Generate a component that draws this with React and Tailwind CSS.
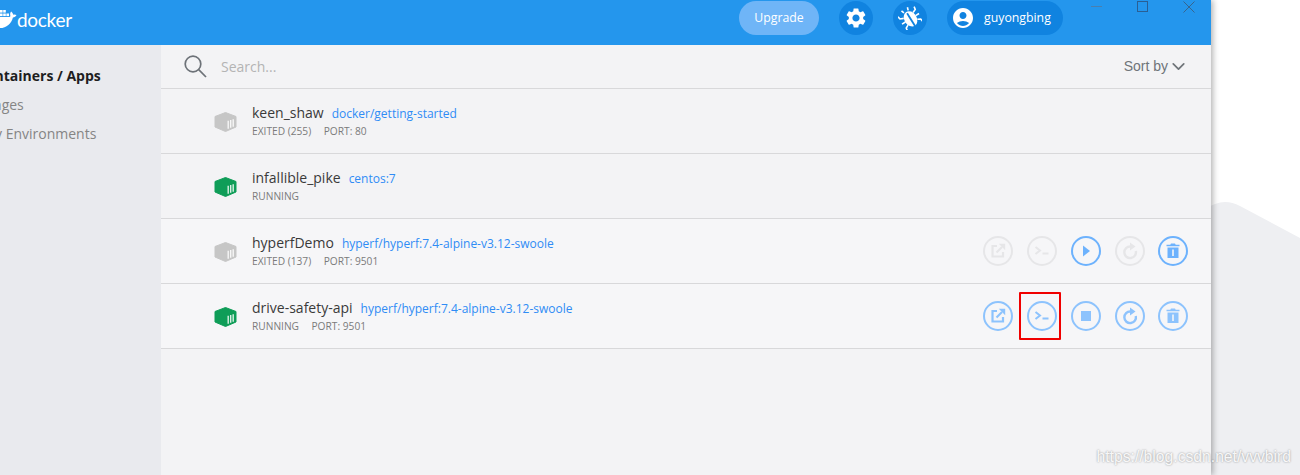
import React from "react";
import { MdSettings, MdAccountCircle, MdStop } from "react-icons/md";
import { ChevronDown } from "lucide-react";

const containers = [
  { name: "keen_shaw", image: "docker/getting-started", status: "EXITED (255)", port: "PORT: 80", running: false },
  { name: "infallible_pike", image: "centos:7", status: "RUNNING", running: true },
  { name: "hyperfDemo", image: "hyperf/hyperf:7.4-alpine-v3.12-swoole", status: "EXITED (137)", port: "PORT: 9501", running: false, actions: "stopped" },
  { name: "drive-safety-api", image: "hyperf/hyperf:7.4-alpine-v3.12-swoole", status: "RUNNING", port: "PORT: 9501", running: true, actions: "running" },
];

// whale is cut by the left edge of the window
function WhaleLogo() {
  return (
    <svg width="17" height="24" viewBox="0 0 17 24" className="shrink-0 fill-white">
      <rect x="0" y="5.500" width="2.600" height="2.600" />
      <rect x="3.200" y="5.500" width="2.600" height="2.600" />
      <rect x="3.200" y="2" width="2.600" height="2.600" />
      <rect x="0" y="2" width="2.600" height="2.600" />
      <rect x="6.400" y="5.500" width="2.600" height="2.600" />
      <path d="M0 9h8.800c.9 0 1.500-.4 1.600-1.100-.5-1.500-.3-3 .7-4.400 1.200.9 1.900 2 2 3.200 1-.4 2.300-.3 3.400.4-.7 1.500-2 2.300-3.600 2.300C11.500 15.500 6.500 20 0 20Z" />
    </svg>
  );
}

function BugIcon() {
  return (
    <svg width="24" height="24" viewBox="0 0 24 24">
      <g transform="rotate(-32 12 12)">
        <g stroke="#fff" strokeWidth="1.600" fill="none">
          <path d="M6.500 9 3 7.500 2.500 4.500" />
          <path d="M17.500 9 21 7.500 21.500 4.500" />
          <path d="M6 13H2" />
          <path d="M18 13h4" />
          <path d="M6.500 17 3.500 18.500 3 21.500" />
          <path d="M17.500 17 20.500 18.500 21 21.500" />
          <path d="M9.500 4.500 8.500 1.500" />
          <path d="M14.500 4.500 15.500 1.500" />
        </g>
        <ellipse cx="12" cy="13" rx="6.200" ry="8.200" fill="#fff" />
        <path d="M12 6.500V21.500" stroke="#1083e0" strokeWidth="1.800" />
      </g>
    </svg>
  );
}

function SearchGlyph() {
  return (
    <svg width="23" height="23" viewBox="0 0 23 23" fill="none" stroke="#6d7278" strokeWidth="1.700" className="shrink-0">
      <circle cx="9" cy="9" r="7.800" />
      <path d="M14.700 14.700 22 22" />
    </svg>
  );
}

function ContainerIcon({ running }) {
  const fill = running ? "#0f9d58" : "#c6c6c6";
  return (
    <svg width="23" height="20" viewBox="0 0 23 20" className="shrink-0 mt-[1px]">
      <path d="M11.500 0.500 22 4.500V15L11.500 19.500 1 15V4.500Z" fill={fill} stroke={fill} strokeLinejoin="round" />
      <path d="M13.500 8.800h1.400v8h-1.400zM16 8h1.400v7.800H16zM18.500 7.200h1.400v7.600h-1.400z" fill="#fff" opacity="0.85" />
    </svg>
  );
}

function OpenGlyph() {
  return (
    <svg width="18" height="18" viewBox="0 0 18 18" fill="none" stroke="currentColor" strokeWidth="2.200">
      <path d="M8 4H3.500V14.500H14V10" />
      <path d="M7.500 10.500 13 5" />
      <path d="M9.800 1.800H16.200V8.200Z" fill="currentColor" stroke="none" />
    </svg>
  );
}

function TerminalGlyph() {
  return (
    <svg width="18" height="18" viewBox="0 0 18 18" fill="none" stroke="currentColor" strokeWidth="2">
      <path d="M2.500 5 7 8.500 2.500 12" />
      <path d="M9.500 11.500h6" />
    </svg>
  );
}

function PlayGlyph() {
  return (
    <svg width="18" height="18" viewBox="0 0 18 18" fill="currentColor">
      <path d="M6 3.500 13 9 6 14.500Z" />
    </svg>
  );
}

function RestartGlyph() {
  return (
    <svg width="20" height="20" viewBox="0 0 20 20" fill="none">
      <path d="M10.500 5.500A5.800 5.800 0 1 0 15.800 10" stroke="currentColor" strokeWidth="2.400" />
      <path d="M10 1.500 15.500 5.500 10 9.500Z" fill="currentColor" />
    </svg>
  );
}

function TrashGlyph() {
  return (
    <svg width="18" height="18" viewBox="0 0 18 18" fill="currentColor">
      <path d="M7 1.500h4l.7 1.200H15.500v1.600H2.500V2.700h3.800Z" />
      <path d="M3.500 5.500h11V16H3.500ZM8.200 7.500v6.500h1.600V7.500Z" fillRule="evenodd" />
    </svg>
  );
}

// tone: off = greyed out, on = full blue, soft = pale blue
function ActionButton({ tone, className = "", children }) {
  const toneClass = {
    off: "border-[#e6e6e8] text-[#e6e6e8]",
    on: "border-[#6db2fd] text-[#6db2fd]",
    soft: "border-[#8dc3fd] text-[#8dc3fd]",
  }[tone];
  return (
    <div className={`w-[30px] h-[30px] rounded-full border-2 flex items-center justify-center shrink-0 ${toneClass} ${className}`}>
      {children}
    </div>
  );
}

function RowActions({ kind }) {
  if (kind === "stopped") {
    return (
      <div className="ml-auto flex items-center gap-[14px]">
        <ActionButton tone="off"><OpenGlyph /></ActionButton>
        <ActionButton tone="off"><TerminalGlyph /></ActionButton>
        <ActionButton tone="on"><PlayGlyph /></ActionButton>
        <ActionButton tone="off"><RestartGlyph /></ActionButton>
        <ActionButton tone="on" className="-ml-[1px]"><TrashGlyph /></ActionButton>
      </div>
    );
  }
  return (
    <div className="ml-auto flex items-center gap-[14px]">
      <ActionButton tone="soft"><OpenGlyph /></ActionButton>
      <div className="relative">
        <ActionButton tone="soft"><TerminalGlyph /></ActionButton>
        {/* red annotation box from the screenshot */}
        <div className="absolute left-[-8px] top-[-9px] w-[42px] h-[48px] border-2 border-[#f00000] rounded-[1px]" />
      </div>
      <ActionButton tone="soft"><MdStop size={20} /></ActionButton>
      <ActionButton tone="soft"><RestartGlyph /></ActionButton>
      <ActionButton tone="soft" className="-ml-[1px]"><TrashGlyph /></ActionButton>
    </div>
  );
}

function ContainerRow({ item }) {
  return (
    <div className={`h-[65px] shrink-0 flex items-center pl-[53px] pr-[23px] border-b border-[#d8d8da] ${item.actions ? "bg-[#f6f6f8]" : ""}`}>
      <ContainerIcon running={item.running} />
      <div className="ml-[15px] flex flex-col -mt-[1px]">
        <div className="flex items-baseline h-[20px]">
          <span className="text-[14px] text-[#3a3a3a]">{item.name}</span>
          <span className="ml-[8px] text-[12px] text-[#2f8cf5]">{item.image}</span>
        </div>
        <div className="flex mt-[3px] h-[15px] items-center text-[10.200px] text-[#7b7b7b] gap-[12.500px]">
          <span>{item.status}</span>
          {item.port && <span>{item.port}</span>}
        </div>
      </div>
      {item.actions && <RowActions kind={item.actions} />}
    </div>
  );
}

export default function App() {
  return (
    <div className="relative w-[1300px] h-[475px] overflow-hidden bg-white font-['Open_Sans',sans-serif]">
      {/* background shape behind the window */}
      <svg className="absolute left-0 top-0" width="1300" height="475" viewBox="0 0 1300 475">
        <path d="M1190 215L1215 204Q1227 199 1240 206L1300 238V475H1190Z" fill="#eeeff2" />
      </svg>

      <div className="relative w-[1211px] h-full flex flex-col bg-[#f3f3f5] shadow-[2px_0_6px_rgba(0,0,0,0.3)]">
        {/* TOP BAR */}
        <div className="h-[45px] shrink-0 bg-[#2496ed] flex items-start text-white overflow-hidden">
          <div className="flex items-center mt-[8px]">
            <WhaleLogo />
            <span className="text-[19px] leading-[24px] tracking-[-0.3px] font-['Lato',sans-serif]">docker</span>
          </div>

          <div className="ml-auto flex items-start mt-[1px]">
            <div className="w-[80px] h-[34px] rounded-full bg-[#6fb5f7] flex items-center justify-center text-[12.300px]">Upgrade</div>
            <div className="ml-[20px] w-[34px] h-[34px] rounded-full bg-[#1083e0] flex items-center justify-center">
              <MdSettings size={24} />
            </div>
            <div className="ml-[20px] w-[34px] h-[34px] rounded-full bg-[#1083e0] flex items-center justify-center">
              <BugIcon />
            </div>
            <div className="ml-[20px] w-[116px] h-[34px] rounded-full bg-[#1083e0] flex items-center pl-[4px]">
              <MdAccountCircle size={24} />
              <span className="ml-[9px] text-[12.300px]">guyongbing</span>
            </div>

            {/* window controls */}
            <div className="ml-[28px] mr-[16px] flex items-start">
              <div className="mt-[5px] w-[11px] h-[1px] bg-[#4a7fae]" />
              <div className="ml-[35px] w-[11px] h-[11px] border border-[#2a5f94]" />
              <svg className="ml-[35px]" width="12" height="12" viewBox="0 0 12 12" stroke="#36658f" strokeWidth="1">
                <path d="M0.500 0.500 11.500 11.500M11.500 0.500 0.500 11.500" />
              </svg>
            </div>
          </div>
        </div>

        <div className="flex flex-1 min-h-0">
          {/* SIDEBAR */}
          <div className="w-[161px] shrink-0 bg-[#e9eaee] pt-[20px] overflow-hidden">
            <div className="-ml-[23px] flex flex-col whitespace-nowrap text-[14px] leading-[22px] gap-[7px]">
              <div className="font-bold text-[#1e1e1e]">Containers / Apps</div>
              <div className="text-[#858585]">Images</div>
              <div className="text-[#858585]">Dev Environments</div>
            </div>
          </div>

          {/* MAIN */}
          <div className="flex-1 min-w-0 flex flex-col">
            <div className="h-[44px] shrink-0 border-b border-[#d8d8da] flex items-center pl-[23px] pr-[22px]">
              <SearchGlyph />
              <span className="ml-[14px] text-[14px] text-[#b4b4b4]">Search...</span>
              <span className="ml-auto text-[14px] text-[#6f7479] font-['Liberation_Sans',sans-serif]">Sort by</span>
              <ChevronDown size={21} className="text-[#6f7479]" />
            </div>
            {containers.map((c) => (
              <ContainerRow key={c.name} item={c} />
            ))}
          </div>
        </div>
      </div>

      {/* CSDN watermark */}
      <div className="absolute right-[9px] bottom-[9px] text-[15.700px] leading-[18px] text-white/90 font-['Liberation_Sans',sans-serif] [text-shadow:0_0_2px_rgba(0,0,0,0.45)]">
        https://blog.csdn.net/vvvbird
      </div>
    </div>
  );
}
